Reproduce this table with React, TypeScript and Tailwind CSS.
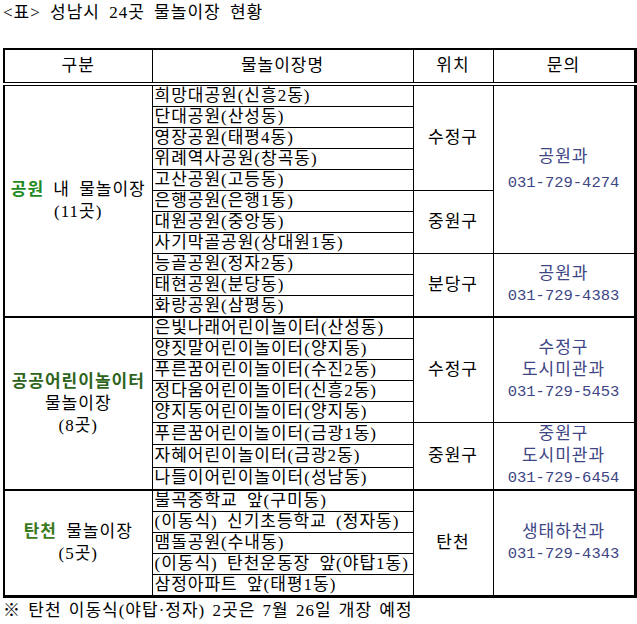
const KR = "font-['Liberation_Serif','Noto_Sans_CJK_KR',serif]";

type Group = { span: number; lines: string[]; wide?: boolean };

type Section = {
  label: React.ReactNode;
  names: string[];
  places: Group[];
  contacts: Group[];
};

const sections: Section[] = [
  {
    label: (
      <>
        <div>
          <span className="font-bold text-[#1f8a1f]">공원</span> 내 물놀이장
        </div>
        <div>(11곳)</div>
      </>
    ),
    names: [
      "희망대공원(신흥2동)",
      "단대공원(산성동)",
      "영장공원(태평4동)",
      "위례역사공원(창곡동)",
      "고산공원(고등동)",
      "은행공원(은행1동)",
      "대원공원(중앙동)",
      "사기막골공원(상대원1동)",
      "능골공원(정자2동)",
      "태현공원(분당동)",
      "화랑공원(삼평동)",
    ],
    places: [
      { span: 5, lines: ["수정구"] },
      { span: 3, lines: ["중원구"] },
      { span: 3, lines: ["분당구"] },
    ],
    contacts: [
      { span: 8, lines: ["공원과", "031-729-4274"], wide: true },
      { span: 3, lines: ["공원과", "031-729-4383"] },
    ],
  },
  {
    label: (
      <>
        <div className="font-bold text-[#2e6420]">공공어린이놀이터</div>
        <div>물놀이장</div>
        <div>(8곳)</div>
      </>
    ),
    names: [
      "은빛나래어린이놀이터(산성동)",
      "양짓말어린이놀이터(양지동)",
      "푸른꿈어린이놀이터(수진2동)",
      "정다움어린이놀이터(신흥2동)",
      "양지동어린이놀이터(양지동)",
      "푸른꿈어린이놀이터(금광1동)",
      "자혜어린이놀이터(금광2동)",
      "나들이어린이놀이터(성남동)",
    ],
    places: [
      { span: 5, lines: ["수정구"] },
      { span: 3, lines: ["중원구"] },
    ],
    contacts: [
      { span: 5, lines: ["수정구", "도시미관과", "031-729-5453"] },
      { span: 3, lines: ["중원구", "도시미관과", "031-729-6454"] },
    ],
  },
  {
    label: (
      <>
        <div>
          <span className="font-bold text-[#3a7a1c]">탄천</span> 물놀이장
        </div>
        <div>(5곳)</div>
      </>
    ),
    names: [
      "불곡중학교 앞(구미동)",
      "(이동식) 신기초등학교 (정자동)",
      "맴돌공원(수내동)",
      "(이동식) 탄천운동장 앞(야탑1동)",
      "삼정아파트 앞(태평1동)",
    ],
    places: [{ span: 5, lines: ["탄천"] }],
    contacts: [{ span: 5, lines: ["생태하천과", "031-729-4343"] }],
  },
];

function startsAt(groups: Group[]) {
  const map = new Map<number, Group>();
  let i = 0;
  for (const g of groups) {
    map.set(i, g);
    i += g.span;
  }
  return map;
}

function ContactLines({ group }: { group: Group }) {
  return (
    <div className={`flex flex-col items-center leading-[22px] text-[#3d4585] ${group.wide ? "gap-1" : ""}`}>
      {group.lines.map((l) =>
        l.startsWith("031") ? (
          <span key={l} className="font-['Liberation_Mono',monospace] text-[15.5px] tracking-normal">
            {l}
          </span>
        ) : (
          <span key={l}>{l}</span>
        )
      )}
    </div>
  );
}

export default function App() {
  return (
    <div className={`w-[637px] h-[624px] bg-white text-black ${KR} text-[17px] tracking-[1px] [word-spacing:4px]`}>
      <div className="h-[48px] pl-[3px] pt-[3px] leading-[20px]">
        &lt;표&gt; 성남시 24곳 물놀이장 현황
      </div>

      <table className="ml-[3px] w-[631px] table-fixed border-collapse border-t-2 border-l-2 border-r-[3px] border-b-[3px] border-black">
        <colgroup>
          <col className="w-[148px]" />
          <col className="w-[261px]" />
          <col className="w-[80px]" />
          <col className="w-[142px]" />
        </colgroup>
        <thead>
          <tr className="h-[35px]">
            {["구분", "물놀이장명", "위치", "문의"].map((h) => (
              <th
                key={h}
                className="border border-black border-b-[4px] border-b-black border-double p-0 text-center font-normal leading-[20px]"
              >
                {h}
              </th>
            ))}
          </tr>
        </thead>
        <tbody>
          {sections.map((s, si) => {
            const places = startsAt(s.places);
            const contacts = startsAt(s.contacts);
            return s.names.map((name, i) => {
              const top = i === 0 && si > 0 ? "border-t-2" : "";
              const place = places.get(i);
              const contact = contacts.get(i);
              return (
                <tr key={name + si + i} className="h-[21px]">
                  {i === 0 ? (
                    <td
                      rowSpan={s.names.length}
                      className={`border border-black ${top} p-0 text-center align-middle leading-[22px]`}
                    >
                      {s.label}
                    </td>
                  ) : null}
                  <td className={`border border-black ${top} whitespace-nowrap p-0 pl-[2px] leading-[20px]`}>
                    {name}
                  </td>
                  {place ? (
                    <td
                      rowSpan={place.span}
                      className={`border border-black ${top} p-0 text-center align-middle`}
                    >
                      {place.lines[0]}
                    </td>
                  ) : null}
                  {contact ? (
                    <td
                      rowSpan={contact.span}
                      className={`border border-black ${top} p-0 text-center align-middle`}
                    >
                      <ContactLines group={contact} />
                    </td>
                  ) : null}
                </tr>
              );
            });
          })}
        </tbody>
      </table>

      <div className="pl-[3px] pt-[3px] leading-[20px] [word-spacing:2px]">
        ※ 탄천 이동식(야탑·정자) 2곳은 7월 26일 개장 예정
      </div>
    </div>
  );
}
